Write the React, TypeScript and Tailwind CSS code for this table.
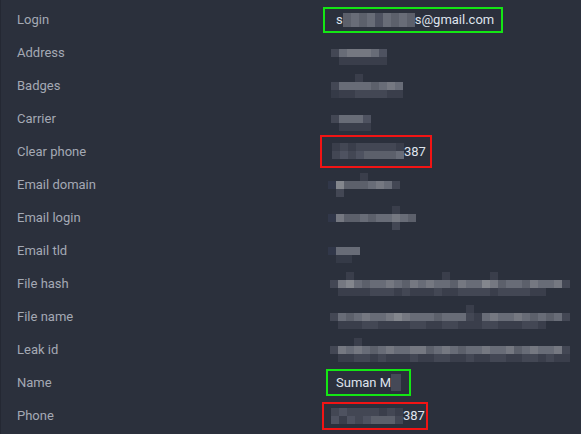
import type { ReactNode } from 'react';

// pixelated (redacted) cells, one char per 8px block
const C: Record<string, string> = {
  '.': 'bg-transparent',
  '0': 'bg-[#313749]',
  '1': 'bg-[#353a47]',
  '2': 'bg-[#3a3e4b]',
  '3': 'bg-[#434754]',
  '4': 'bg-[#4e5260]',
  '5': 'bg-[#5c606b]',
  '6': 'bg-[#686c77]',
  '7': 'bg-[#757881]',
  '8': 'bg-[#83868d]',
};

function Cells({ row, tall }: { row: string; tall?: boolean }) {
  return (
    <div className="flex">
      {row.split('').map((ch, i) => (
        <span key={i} className={`block w-2 ${tall ? 'h-[14px]' : 'h-2'} ${C[ch]}`} />
      ))}
    </div>
  );
}

function Pix({ top = '', main, under = '' }: { top?: string; main: string; under?: string }) {
  return (
    <div className="flex flex-col">
      <div className="h-2">
        <Cells row={top} />
      </div>
      <Cells row={main} />
      <div className="h-2">
        <Cells row={under} />
      </div>
    </div>
  );
}

function Box({ color, children, className }: { color: 'green' | 'red'; children: ReactNode; className: string }) {
  return (
    <div
      className={`flex items-center border-2 ${color === 'green' ? 'border-[#14e614]' : 'border-[#f21414]'} ${className}`}
    >
      {children}
    </div>
  );
}

type Row = { label: string; value: ReactNode };

const rows: Row[] = [
  {
    label: 'Login',
    value: (
      <Box color="green" className="ml-[3px] h-[26px] pl-[11px] pr-[7px]">
        <span>s</span>
        <Cells row="565646565" tall />
        <span>s@gmail.com</span>
      </Box>
    ),
  },
  {
    label: 'Address',
    value: (
      <div className="ml-[11px]">
        <Pix main="3677764" under=".222222" />
      </div>
    ),
  },
  {
    label: 'Badges',
    value: (
      <div className="ml-[11px]">
        <Pix top="...2" main="366665676" under="122333322" />
      </div>
    ),
  },
  {
    label: 'Carrier',
    value: (
      <div className="ml-[11px]">
        <Pix main="36664" under=".2222" />
      </div>
    ),
  },
  {
    label: 'Clear phone',
    value: (
      <Box color="red" className="h-[33px] pl-[10px] pr-[4px]">
        <div className="flex flex-col mt-[-2px]">
          <Cells row="232333332" />
          <Cells row="343455556" />
        </div>
        <span>387</span>
      </Box>
    ),
  },
  {
    label: 'Email domain',
    value: (
      <div className="ml-[8px]">
        <Pix top="....2" main="085556763" under=".3" />
      </div>
    ),
  },
  {
    label: 'Email login',
    value: (
      <div className="ml-[8px]">
        <Pix top="........2" main="07556566765" under="........3" />
      </div>
    ),
  },
  {
    label: 'Email tld',
    value: (
      <div className="ml-[8px]">
        <Pix main="0666" under=".11" />
      </div>
    ),
  },
  {
    label: 'File hash',
    value: (
      <div className="ml-[10px]">
        <Pix
          top="..2...........2.....2........"
          main="378656676576766576687566576673"
          under=".22223332322232233332333322.."
        />
      </div>
    ),
  },
  {
    label: 'File name',
    value: (
      <div className="ml-[10px]">
        <Pix
          top=".................2..........."
          main="365676678766656663267667656563"
          under=".22233222233223322233222332..."
        />
      </div>
    ),
  },
  {
    label: 'Leak id',
    value: (
      <div className="ml-[10px]">
        <Pix
          top="...2.........................."
          main="376765676677567656676675676673"
          under=".22332322232233223223322332322"
        />
      </div>
    ),
  },
  {
    label: 'Name',
    value: (
      <Box color="green" className="ml-[6px] h-[27px] pl-[8px] pr-[8px]">
        <span>Suman M</span>
        <span className="block w-[10px] h-[17px] bg-[#454957]" />
      </Box>
    ),
  },
  {
    label: 'Phone',
    value: (
      <Box color="red" className="ml-[2px] h-[28px] pl-[7px] pr-[1px]">
        <div className="flex flex-col">
          <Cells row="343333232" />
          <Cells row="424345553" />
        </div>
        <span>387</span>
      </Box>
    ),
  },
];

export default function App() {
  return (
    <div className="w-[581px] h-[434px] overflow-hidden bg-[#2b303c] border-l border-[#242833] pt-[3px] font-['Roboto',sans-serif] text-[13px]">
      {rows.map((r) => (
        <div key={r.label} className="flex h-[33px] items-center">
          <div className="w-[319px] pl-4 text-[#a4a9b4]">{r.label}</div>
          <div className="flex flex-1 items-center text-[#dfe3ec]">{r.value}</div>
        </div>
      ))}
    </div>
  );
}
